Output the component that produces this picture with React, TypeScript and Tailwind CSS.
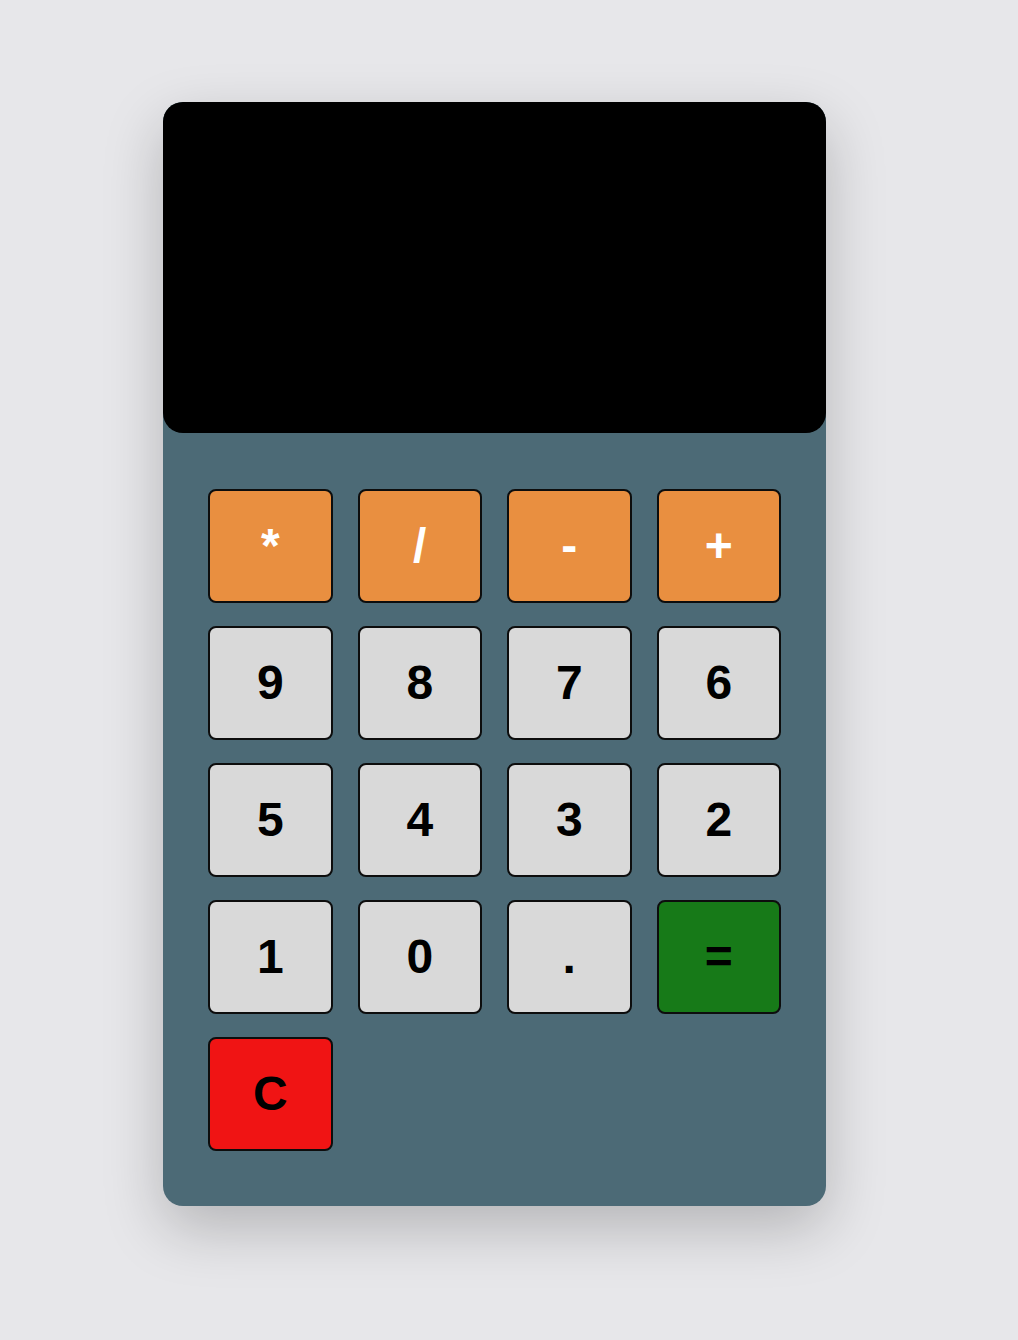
const keys: { label: string; kind: "op" | "num" | "eq" | "clr" }[] = [
  { label: "*", kind: "op" },
  { label: "/", kind: "op" },
  { label: "-", kind: "op" },
  { label: "+", kind: "op" },
  { label: "9", kind: "num" },
  { label: "8", kind: "num" },
  { label: "7", kind: "num" },
  { label: "6", kind: "num" },
  { label: "5", kind: "num" },
  { label: "4", kind: "num" },
  { label: "3", kind: "num" },
  { label: "2", kind: "num" },
  { label: "1", kind: "num" },
  { label: "0", kind: "num" },
  { label: ".", kind: "num" },
  { label: "=", kind: "eq" },
  { label: "C", kind: "clr" },
];

const kindClass = {
  op: "bg-[#e98f40] text-white",
  num: "bg-[#d9d9d9] text-black",
  eq: "bg-[#177a18] text-black",
  clr: "bg-[#f01414] text-black",
};

export default function App() {
  return (
    <div className="min-h-[1340px] bg-[#e7e7ea] pt-[102px] pl-[163px] font-['Liberation_Sans',Arial,sans-serif]">
      <div className="w-[663px] h-[1104px] rounded-[20px] bg-[#4c6a76] shadow-[0_22px_60px_rgba(0,0,0,0.22)]">
        {/* Display */}
        <div className="h-[331px] rounded-[20px] bg-black" />

        {/* Keys */}
        <div className="grid grid-cols-4 gap-x-[25px] gap-y-[23px] px-[45px] pt-[56px]">
          {keys.map((k) => (
            <button
              key={k.label}
              className={`h-[114px] rounded-[8px] border-2 border-[#0d0d0d] flex items-center justify-center text-[48px] font-bold leading-none ${kindClass[k.kind]}`}
            >
              {k.label}
            </button>
          ))}
        </div>
      </div>
    </div>
  );
}
